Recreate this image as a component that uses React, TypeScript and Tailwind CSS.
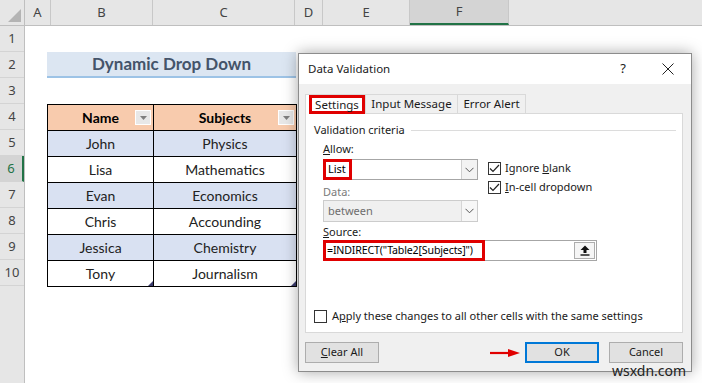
import React from 'react';

const cols = [
  { label: 'A', w: 'w-[26px]' },
  { label: 'B', w: 'w-[102px]' },
  { label: 'C', w: 'w-[142px]' },
  { label: 'D', w: 'w-[28px]' },
  { label: 'E', w: 'w-[87px]' },
  { label: 'F', w: 'w-[99px]', sel: true },
];

const rows = [
  { name: 'John', subject: 'Physics' },
  { name: 'Lisa', subject: 'Mathematics' },
  { name: 'Evan', subject: 'Economics' },
  { name: 'Chris', subject: 'Accounding' },
  { name: 'Jessica', subject: 'Chemistry' },
  { name: 'Tony', subject: 'Journalism' },
];

function FilterButton() {
  return (
    <span className="absolute right-[2px] top-[5px] flex h-[15px] w-[16px] items-center justify-center border border-white bg-[#e8e8e8]">
      <svg width="7" height="4" viewBox="0 0 7 4">
        <path d="M0 0 L7 0 L3.5 4 Z" fill="#7f7f7f" />
      </svg>
    </span>
  );
}

function Chevron({ color = '#555' }: { color?: string }) {
  return (
    <svg width="9" height="6" viewBox="0 0 9 6">
      <path d="M0.5 0.8 L4.5 4.8 L8.5 0.8" fill="none" stroke={color} strokeWidth="1" />
    </svg>
  );
}

function Check({ checked }: { checked?: boolean }) {
  return (
    <span className="flex h-[13px] w-[13px] shrink-0 items-center justify-center border border-[#333] bg-white">
      {checked && (
        <svg width="11" height="9" viewBox="0 0 11 9">
          <path d="M1 4.5 L4 7.5 L10 1" fill="none" stroke="#222" strokeWidth="1.2" />
        </svg>
      )}
    </span>
  );
}

function Sheet() {
  return (
    <div className="flex h-full flex-col bg-white font-['Lato',sans-serif]">
      {/* заголовки колонок */}
      <div className="flex h-[26px] shrink-0 border-b border-[#bfbfbf] bg-[#e6e6e6] font-['Noto_Sans',sans-serif] text-[13px] text-[#444]">
        <div className="relative w-[25px] border-r border-[#bfbfbf]">
          <svg className="absolute bottom-[3px] right-[3px]" width="13" height="13" viewBox="0 0 13 13">
            <path d="M13 0 L13 13 L0 13 Z" fill="#b4b4b4" />
          </svg>
        </div>
        {cols.map((c) => (
          <div
            key={c.label}
            className={
              c.sel
                ? `${c.w} flex items-center justify-center border-r border-b-2 border-r-[#c8c8c8] border-b-[#217346] bg-[#d4d4d4]`
                : `${c.w} flex items-center justify-center border-r border-[#c8c8c8]`
            }
          >
            {c.label}
          </div>
        ))}
        <div className="flex-1" />
      </div>

      <div className="flex flex-1">
        {/* номера строк */}
        <div className="flex w-[25px] flex-col border-r border-[#bfbfbf] bg-[#e6e6e6] font-['Noto_Sans',sans-serif] text-[13px] text-[#444]">
          {[1, 2, 3, 4, 5, 6, 7, 8, 9, 10].map((n) => (
            <div
              key={n}
              className={
                n === 6
                  ? 'flex h-[26px] items-center justify-center border-b border-r-2 border-b-[#d4d4d4] border-r-[#217346] bg-[#d4d4d4] text-[#217346]'
                  : 'flex h-[26px] items-center justify-center border-b border-[#d4d4d4]'
              }
            >
              {n}
            </div>
          ))}
        </div>

        <div className="flex-1 pl-[22px]">
          <div className="h-[26px]" />
          <div className="flex h-[26px] w-[249px] items-center justify-center border-b-2 border-[#9dc3e6] bg-[#dce6f2] text-[17px] font-bold text-[#44546a]">
            Dynamic Drop Down
          </div>
          <div className="h-[26px]" />
          <table className="w-[249px] table-fixed border-collapse text-[14px] text-[#222]">
            <colgroup>
              <col className="w-[106px]" />
              <col className="w-[143px]" />
            </colgroup>
            <tbody>
              <tr className="h-[26px] bg-[#f8cbad]">
                <td className="relative border border-black text-center font-bold text-black">
                  Name
                  <FilterButton />
                </td>
                <td className="relative border border-black text-center font-bold text-black">
                  Subjects
                  <FilterButton />
                </td>
              </tr>
              {rows.map((r, i) => (
                <tr key={r.name} className={i % 2 === 0 ? 'h-[26px] bg-[#d9e1f2]' : 'h-[26px] bg-white'}>
                  <td className="relative border border-black text-center">
                    {r.name}
                    {i === rows.length - 1 && (
                      <span className="absolute bottom-0 right-0 h-0 w-0 border-b-[5px] border-l-[5px] border-b-[#3c3c6e] border-l-transparent" />
                    )}
                  </td>
                  <td className="relative border border-black text-center">
                    {r.subject}
                    {i === rows.length - 1 && (
                      <span className="absolute bottom-0 right-0 h-0 w-0 border-b-[5px] border-l-[5px] border-b-[#3c3c6e] border-l-transparent" />
                    )}
                  </td>
                </tr>
              ))}
            </tbody>
          </table>
        </div>
      </div>
    </div>
  );
}

function Dialog() {
  return (
    <div className="absolute left-[298px] top-[53px] flex h-[319px] w-[394px] flex-col border border-[#8c8c8c] bg-[#f0f0f0] font-['Noto_Sans',sans-serif] text-[11px] text-[#1a1a1a] shadow-[0_0_14px_rgba(0,0,0,0.35)]">
      {/* заголовок */}
      <div className="flex h-[30px] shrink-0 items-center bg-white pl-[9px] pr-[17px] text-[11.5px]">
        <span className="flex-1">Data Validation</span>
        <span className="mr-[36px] text-[13px]">?</span>
        <svg width="12" height="12" viewBox="0 0 12 12">
          <path d="M0.5 0.5 L11.5 11.5 M11.5 0.5 L0.5 11.5" stroke="#222" strokeWidth="1" />
        </svg>
      </div>

      <div className="flex flex-1 flex-col px-[6px] pt-[10px]">
        {/* вкладки */}
        <div className="flex h-[19px] items-end">
          <div className="relative z-10 -mb-px flex h-[20px] w-[61px] items-center border border-b-0 border-[#d9d9d9] bg-white">
            <span className="ml-[3px] flex h-[19px] w-[57px] items-center justify-center border-[3px] border-[#e00000] text-[11.5px]">
              Settings
            </span>
          </div>
          <div className="flex h-[19px] w-[92px] items-center justify-center border border-b-0 border-l-0 border-[#d9d9d9] bg-[#f0f0f0] text-[11.5px]">
            Input Message
          </div>
          <div className="flex h-[19px] w-[68px] items-center justify-center border border-b-0 border-l-0 border-[#d9d9d9] bg-[#f0f0f0] text-[11.5px]">
            Error Alert
          </div>
        </div>

        {/* панель */}
        <div className="h-[220px] w-[378px] border border-[#d9d9d9] bg-white pl-[8px] pr-[6px] pt-[8px]">
          <div className="flex h-[16px] items-center">
            <span>Validation criteria</span>
            <span className="ml-[6px] h-px flex-1 bg-[#dcdcdc]" />
          </div>

          <div className="pl-[9px]">
            <div className="flex">
              <div className="flex w-[155px] flex-col">
                <div className="mt-[3px] flex h-[16px] items-center">
                  <span>
                    <span className="underline">A</span>llow:
                  </span>
                </div>
                <div className="relative mt-[2px] flex h-[21px] border border-[#a6a6a6] bg-white">
                  <span className="flex flex-1 items-center pl-[4px] text-black">List</span>
                  <span className="flex w-[16px] items-center justify-center border-l border-[#d0d0d0] bg-[#f3f3f3]">
                    <Chevron />
                  </span>
                  <span className="absolute -left-px -top-px h-[21px] w-[29px] border-[3px] border-[#e00000]" />
                </div>
                <div className="mt-[4px] flex h-[16px] items-center text-[#7a7a7a]">Data:</div>
                <div className="flex h-[22px] border border-[#cccccc] bg-[#f0f0f0]">
                  <span className="flex flex-1 items-center pl-[4px] text-[#6d6d6d]">between</span>
                  <span className="flex w-[16px] items-center justify-center border-l border-[#d6d6d6] bg-[#f7f7f7]">
                    <Chevron />
                  </span>
                </div>
              </div>
              <div className="ml-[10px] flex flex-col pt-[21px]">
                <label className="flex h-[19px] items-center gap-[4px]">
                  <Check checked />
                  <span>
                    Ignore <span className="underline">b</span>lank
                  </span>
                </label>
                <label className="flex h-[19px] items-center gap-[4px]">
                  <Check checked />
                  <span>
                    <span className="underline">I</span>n-cell dropdown
                  </span>
                </label>
              </div>
            </div>

            <div className="mt-[2px] flex h-[16px] items-center">
              <span>
                <span className="underline">S</span>ource:
              </span>
            </div>
            <div className="relative flex h-[21px] w-[274px] items-center border border-[#a6a6a6] bg-white">
              <span className="flex-1 pl-[3px] text-[10.6px] tracking-[-0.15px] text-black">=INDIRECT("Table2[Subjects]")</span>
              <span className="mr-px flex h-[17px] w-[21px] items-center justify-center border border-[#adadad] bg-[#f5f5f5]">
                <svg width="10" height="11" viewBox="0 0 10 11">
                  <path d="M5 0.5 L9.5 5 L6.5 5 L6.5 8 L3.5 8 L3.5 5 L0.5 5 Z" fill="#111" />
                  <path d="M0.5 10 L9.5 10" stroke="#111" strokeWidth="1.4" />
                </svg>
              </span>
              <span className="absolute -left-px -top-px h-[21px] w-[162px] border-[3px] border-[#e00000]" />
            </div>
          </div>

          <label className="mt-[47px] flex h-[16px] items-center gap-[5px]">
            <Check />
            <span>
              A<span className="underline">p</span>ply these changes to all other cells with the same settings
            </span>
          </label>
        </div>

        {/* кнопки */}
        <div className="mt-[9px] flex items-center pr-[2px]">
          <button className="flex h-[21px] w-[74px] items-center justify-center border border-[#adadad] bg-[#e1e1e1]">
            <span>
              <span className="underline">C</span>lear All
            </span>
          </button>
          <div className="flex-1" />
          <svg className="mr-[5px]" width="30" height="8" viewBox="0 0 30 8">
            <path d="M0 4 L20 4" stroke="#e00000" strokeWidth="2.2" />
            <path d="M18 0 L30 4 L18 8 Z" fill="#e00000" />
          </svg>
          <button className="flex h-[21px] w-[74px] items-center justify-center border-2 border-[#0078d7] bg-[#e1e1e1]">
            OK
          </button>
          <button className="ml-[10px] flex h-[21px] w-[74px] items-center justify-center border border-[#adadad] bg-[#e1e1e1]">
            Cancel
          </button>
        </div>
      </div>
    </div>
  );
}

export default function App() {
  return (
    <div className="relative h-[383px] w-[702px] overflow-hidden bg-white">
      <Sheet />
      <Dialog />
      <span className="absolute left-[612px] top-[362px] font-['Noto_Sans',sans-serif] text-[14px] leading-[18px] text-[#222]">
        wsxdn.com
      </span>
    </div>
  );
}
